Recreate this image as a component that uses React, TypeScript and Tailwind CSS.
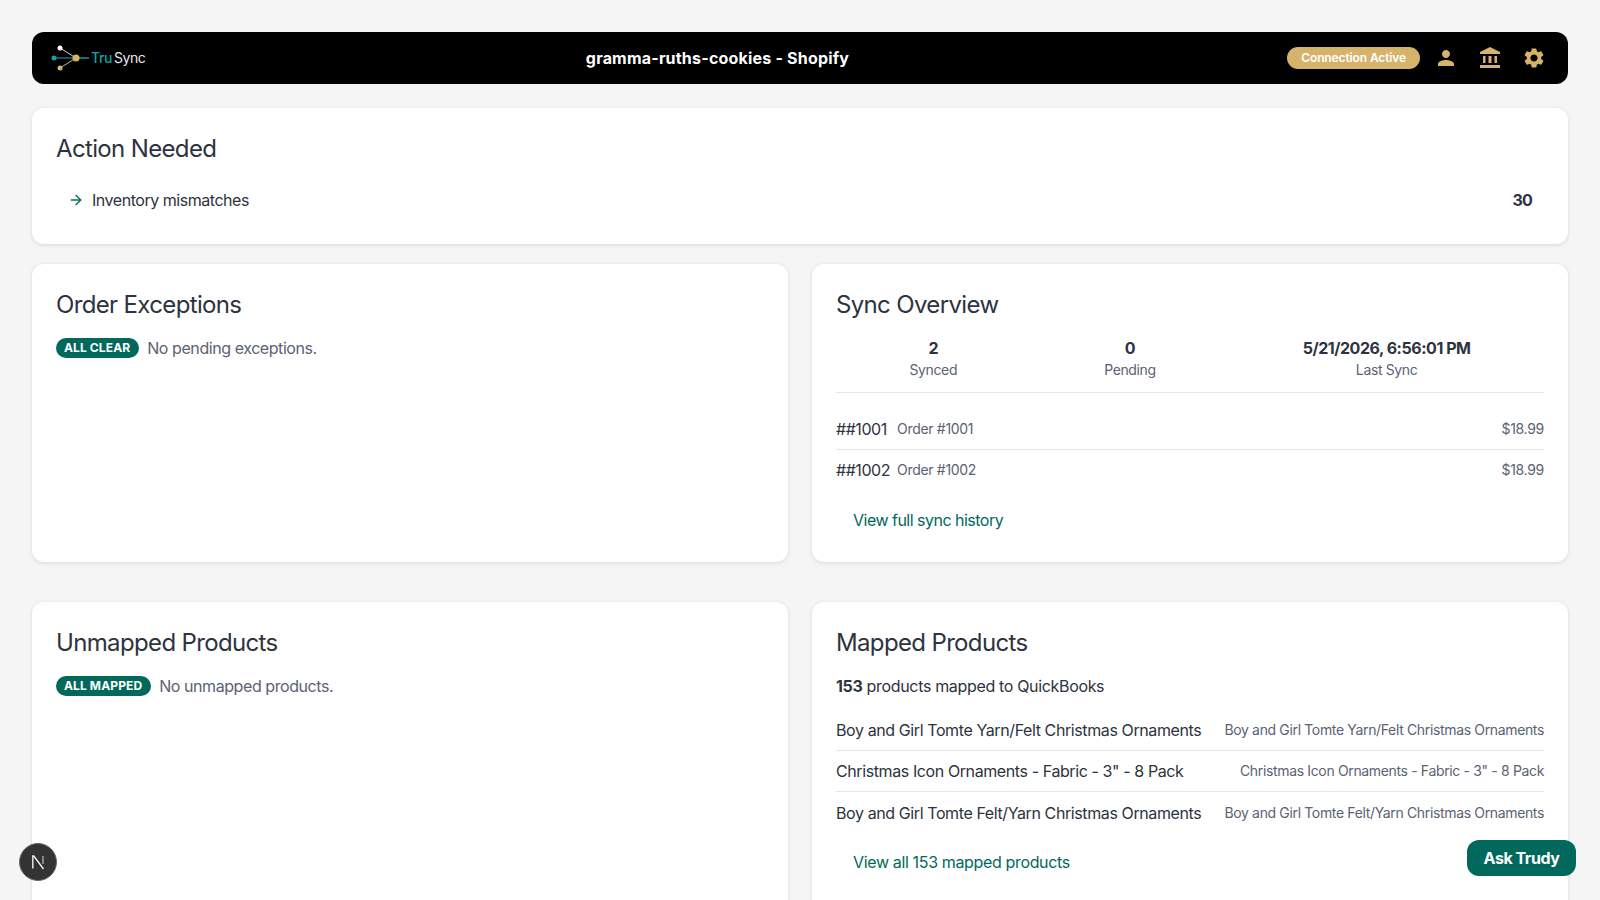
import { ArrowRight } from "lucide-react";

const Logo = () => (
	<div className="flex items-center -ml-[2px]">
		<svg width="40" height="28" viewBox="0 0 40 28">
			<line x1="4" y1="14" x2="26" y2="14" stroke="#0f766e" strokeWidth="1.5" />
			<line x1="10" y1="4" x2="26" y2="14" stroke="#d1d5db" strokeWidth="1" />
			<line x1="10" y1="24" x2="26" y2="14" stroke="#d6b36a" strokeWidth="1" />
			<line x1="26" y1="14" x2="39" y2="14" stroke="#0f9d94" strokeWidth="1.5" />
			<circle cx="4" cy="14" r="2.500" fill="#0ea5a0" />
			<circle cx="10" cy="4" r="2.500" fill="#ffffff" />
			<circle cx="10" cy="24" r="2.500" fill="#d6b36a" />
			<circle cx="26" cy="14" r="3.500" fill="#d6b36a" />
		</svg>
		<span className="text-sm font-medium tracking-[-0.03em] text-[#0ea5a0] ml-[1px]">Tru</span>
		<span className="text-sm tracking-[-0.03em] text-gray-200 ml-[2px]">Sync</span>
	</div>
);

const Card = ({ title, className = "", children }: { title: string; className?: string; children?: React.ReactNode }) => (
	<section className={`bg-white rounded-xl px-6 pt-[25px] shadow-[0_1px_4px_rgba(0,0,0,0.12)] ${className}`}>
		<h2 className="text-2xl leading-8 tracking-[-0.027em] text-[#2d3340]">{title}</h2>
		{children}
	</section>
);

const Badge = ({ children }: { children: React.ReactNode }) => (
	<span className="bg-[#00695c] text-white text-xs leading-5 font-bold tracking-[0.01em] rounded-full pl-[8px] pr-[9px] uppercase">
		{children}
	</span>
);

const Stat = ({ value, label }: { value: string; label: string }) => (
	<div className="text-center">
		<div className="text-base leading-[22px] font-bold tracking-[-0.029em] text-[#2d3340]">{value}</div>
		<div className="text-sm leading-[22px] tracking-[-0.027em] text-[#5b6274]">{label}</div>
	</div>
);

const orders = ["1001", "1002"];

const mapped = [
	"Boy and Girl Tomte Yarn/Felt Christmas Ornaments",
	'Christmas Icon Ornaments - Fabric - 3" - 8 Pack',
	"Boy and Girl Tomte Felt/Yarn Christmas Ornaments",
];

export default function App() {
	return (
		<div className="h-screen overflow-hidden bg-[#f5f5f5] p-8 font-['Inter',sans-serif]">
			<header className="relative h-[52px] bg-black rounded-xl flex items-center justify-between pl-5 pr-[22px]">
				<Logo />
				<h1 className="absolute left-0 w-[1371px] text-center text-white font-bold text-base tracking-[0.2px] pointer-events-none">
					gramma-ruths-cookies - Shopify
				</h1>
				<div className="flex items-center gap-[20px]">
					<span className="bg-[#d6b36a] text-white text-xs leading-[22px] font-semibold tracking-[-0.01em] rounded-full px-[14px] -mr-[6px]">
						Connection Active
					</span>
					<svg width="24" height="24" viewBox="0 0 24 24" fill="#d6b36a">
						<path d="M12 12c2.200 0 4-1.800 4-4s-1.800-4-4-4-4 1.800-4 4 1.800 4 4 4zm0 2c-2.700 0-8 1.300-8 4v2h16v-2c0-2.700-5.300-4-8-4z" />
					</svg>
					<svg width="24" height="24" viewBox="0 0 24 24" fill="#d6b36a">
						<path d="M5 10h2.500v7H5zm5.500 0h3v7h-3zM2 19h20v3H2zM16.500 10H19v7h-2.500zM12 1 2 6v2h20V6z" />
					</svg>
					<svg width="24" height="24" viewBox="0 0 24 24" fill="#d6b36a">
						<path d="M19.140 12.940c.04-.3.060-.61.060-.94 0-.32-.02-.64-.07-.94l2.030-1.580a.49.49 0 0 0 .12-.61l-1.920-3.320a.488.488 0 0 0-.59-.22l-2.390.96c-.5-.38-1.030-.7-1.620-.94l-.36-2.540a.484.484 0 0 0-.48-.41h-3.840c-.24 0-.43.170-.47.410l-.36 2.540c-.59.240-1.130.570-1.620.94l-2.390-.96c-.22-.08-.47 0-.59.220L2.740 8.870c-.12.210-.08.470.12.610l2.030 1.580c-.05.3-.09.630-.09.940s.02.640.07.940l-2.030 1.580a.49.49 0 0 0-.12.610l1.920 3.320c.12.220.37.290.59.220l2.390-.96c.5.380 1.030.7 1.620.94l.36 2.540c.05.240.24.410.48.410h3.840c.24 0 .44-.17.470-.41l.36-2.540c.59-.24 1.130-.56 1.620-.94l2.390.96c.22.080.47 0 .59-.22l1.920-3.320c.12-.22.070-.47-.12-.61l-2.010-1.580zM12 15.600c-1.980 0-3.600-1.620-3.600-3.600s1.620-3.600 3.600-3.600 3.600 1.620 3.600 3.600-1.620 3.600-3.600 3.600z" />
					</svg>
				</div>
			</header>

			<Card title="Action Needed" className="mt-6 h-[136px]">
				<div className="flex items-center justify-between mt-[23px] pl-[11px] pr-[12px]">
					<div className="flex items-center gap-2 text-[#2d3340] tracking-[-0.029em]">
						<ArrowRight size={16} className="text-[#00695c] ml-[1px]" />
						<span>Inventory mismatches</span>
					</div>
					<span className="font-bold text-[#2d3340] tracking-[-0.05em]">30</span>
				</div>
			</Card>

			<div className="grid grid-cols-2 gap-6 mt-5">
				<Card title="Order Exceptions" className="h-[298px]">
					<div className="flex items-center gap-2 mt-[15px] text-[#5b6274]">
						<Badge>All Clear</Badge>
						<span className="tracking-[-0.027em]">No pending exceptions.</span>
					</div>
				</Card>
				<Card title="Sync Overview" className="h-[298px]">
					<div className="flex justify-around mt-[16px] pb-[11px] border-b border-gray-200">
						<Stat value="2" label="Synced" />
						<Stat value="0" label="Pending" />
						<Stat value="5/21/2026, 6:56:01 PM" label="Last Sync" />
					</div>
					<div className="mt-4">
						{orders.map((o, i) => (
							<div
								key={o}
								className={`flex items-center justify-between ${i === 0 ? "h-[41px] border-b border-gray-200" : "h-[40px]"}`}
							>
								<div className="flex items-center gap-2">
									<span className="w-[53px] whitespace-nowrap text-[#2d3340] tracking-[-0.029em]">##{o}</span>
									<span className="text-sm text-[#5b6274] tracking-[-0.022em]">Order #{o}</span>
								</div>
								<span className="text-sm text-[#5b6274] tracking-[-0.022em]">$18.99</span>
							</div>
						))}
					</div>
					<button type="button" className="text-[#00695c] pl-[17px] mt-[18px] tracking-[-0.032em]">
						View full sync history
					</button>
				</Card>
			</div>

			<div className="grid grid-cols-2 gap-6 mt-10">
				<Card title="Unmapped Products" className="h-[400px]">
					<div className="flex items-center gap-2 mt-[15px] text-[#5b6274]">
						<Badge>All Mapped</Badge>
						<span className="tracking-[-0.027em]">No unmapped products.</span>
					</div>
				</Card>
				<Card title="Mapped Products" className="h-[400px]">
					<p className="mt-[15px] text-[#2d3340] tracking-[-0.021em]">
						<b>153</b> products mapped to QuickBooks
					</p>
					<div className="mt-[12px]">
						{mapped.map((m, i) => (
							<div
								key={m}
								className={`flex items-center justify-between h-[41px] whitespace-nowrap ${i < 2 ? "border-b border-gray-200" : ""}`}
							>
								<span className="text-[#2d3340] tracking-[-0.025em]">{m}</span>
								<span className="text-sm text-[#5b6274] tracking-[-0.025em]">{m}</span>
							</div>
						))}
					</div>
					<button type="button" className="text-[#00695c] pl-[17px] mt-[17px] tracking-[-0.022em]">
						View all 153 mapped products
					</button>
				</Card>
			</div>

			<div className="fixed left-[19px] bottom-[19px] w-[38px] h-[38px] rounded-full bg-[#333] border border-[#666] flex items-center justify-center">
				<svg width="16" height="16" viewBox="0 0 16 16" fill="none">
					<path d="M2.800 14.500V2H3.800L13.500 15" stroke="#f0f0f0" strokeWidth="1.400" />
					<path d="M13 2V10" stroke="#aaaaaa" strokeWidth="1.400" />
				</svg>
			</div>
			<button
				type="button"
				className="fixed right-[24px] bottom-[24px] h-[36px] w-[109px] rounded-xl bg-[#00695c] text-white font-bold tracking-[-0.029em]"
			>
				Ask Trudy
			</button>
		</div>
	);
}
